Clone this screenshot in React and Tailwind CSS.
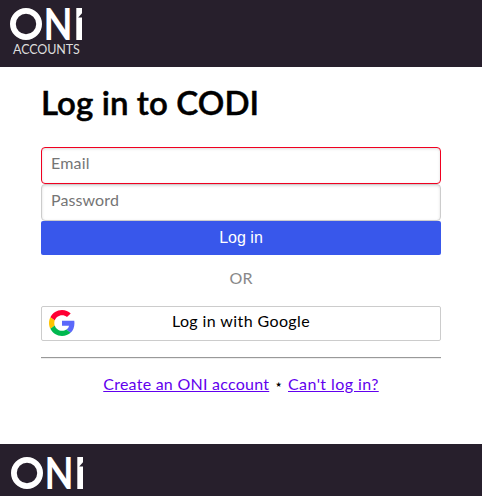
import React from "react";

const OniLogo = ({ className }) => {
  return (
    <svg className={className} width="73" height="34" viewBox="0 0 73 34" aria-label="ONI">
      <circle cx="16" cy="17" r="13.1" fill="none" stroke="#fff" strokeWidth="5.8" />
      <text
        transform="translate(33.6 33) scale(0.85 1)"
        fontFamily="Lato, sans-serif"
        fontWeight="700"
        fontSize="44.4"
        fill="#fff"
      >
        N
      </text>
      {/* stem with the notched accent */}
      <rect x="66.3" y="1" width="5.7" height="32" fill="#fff" />
      <path d="M68.2 10.4L72.2 6V10.4Z" fill="#271f2c" />
    </svg>
  );
};

const GoogleIcon = () => {
  return (
    <svg className="-mt-px" width="26" height="26" viewBox="0 0 48 48">
      <path
        fill="#ff0033"
        d="M24 9.5c3.54 0 6.71 1.22 9.21 3.6l6.85-6.85C35.9 2.38 30.47 0 24 0 14.62 0 6.51 5.38 2.56 13.22l7.98 6.19C12.43 13.72 17.74 9.5 24 9.5z"
      />
      <path
        fill="#5b68fa"
        d="M46.98 24.55c0-1.57-.15-3.09-.38-4.55H24v9.02h12.94c-.58 2.96-2.26 5.48-4.78 7.18l7.73 6c4.51-4.18 7.09-10.36 7.09-17.65z"
      />
      <path
        fill="#ffc400"
        d="M10.53 28.59c-.48-1.45-.76-2.99-.76-4.59s.27-3.14.76-4.59l-7.98-6.19C.92 16.46 0 20.12 0 24c0 3.88.92 7.54 2.56 10.78l7.97-6.19z"
      />
      <path
        fill="#00b84f"
        d="M24 48c6.48 0 11.93-2.13 15.89-5.81l-7.73-6c-2.15 1.45-4.92 2.3-8.16 2.3-6.26 0-11.57-4.22-13.47-9.91l-7.98 6.19C6.51 42.62 14.62 48 24 48z"
      />
    </svg>
  );
};

const App = () => {
  return (
    <div className="flex h-screen flex-col overflow-hidden bg-white font-[Lato,sans-serif] text-base text-black">
      <header className="h-[67px] shrink-0 bg-[#271f2c] pl-2.5 pt-[7px]">
        <OniLogo className="block overflow-visible" />
        <p className="pl-[3px] text-[12.5px] leading-[18px] tracking-[-0.1px] text-[#ddd]">ACCOUNTS</p>
      </header>

      <main className="mx-auto h-[377px] w-[400px] shrink-0">
        <h1 className="pt-[15px] text-[33px] font-semibold leading-10 tracking-[0.1px] [-webkit-text-stroke:0.5px_#000]">
          Log in to CODI
        </h1>

        <form className="mt-[25px] flex flex-col">
          <input
            type="email"
            placeholder="Email"
            className="h-[37px] rounded border border-[#f00020] px-[9px] pb-1.5 tracking-[0.2px] shadow-[inset_0_1px_3px_#ddd] outline-none placeholder:text-[#757575]"
          />
          <input
            type="password"
            placeholder="Password"
            className="h-[37px] rounded border border-[#ccc] px-[9px] pb-1.5 tracking-[0.1px] shadow-[inset_0_1px_3px_#ddd] outline-none placeholder:text-[#757575]"
          />
          <button
            type="button"
            className="h-[34px] rounded-xs bg-[#3857eb] font-['Liberation_Sans',sans-serif] text-white"
          >
            Log in
          </button>
        </form>

        <p className="mt-[11px] text-center leading-6 text-[#888]">OR</p>

        <button
          type="button"
          className="mt-4 grid h-[35px] w-full grid-cols-[26px_1fr_26px] items-center rounded-xs border border-[#ccc] px-[7px]"
        >
          <GoogleIcon />
          <span className="pb-1.5 tracking-[0.4px]">Log in with Google</span>
        </button>

        <hr className="mt-4 h-0.5 border-t border-b border-t-[#999] border-b-[#eee]" />

        <p className="mt-[13px] flex items-center justify-center gap-[5px] leading-6">
          <a href="#" className="tracking-[0.25px] text-[#6200ee] underline">Create an ONI account</a>
          <span className="font-['DejaVu_Sans',sans-serif] text-sm">⋆</span>
          <a href="#" className="tracking-[0.42px] text-[#6200ee] underline">Can't log in?</a>
        </p>
      </main>

      <footer className="h-[52px] shrink-0 bg-[#271f2c] pl-[11px] pt-3">
        <OniLogo className="block overflow-visible" />
      </footer>
    </div>
  );
};

export default App;
